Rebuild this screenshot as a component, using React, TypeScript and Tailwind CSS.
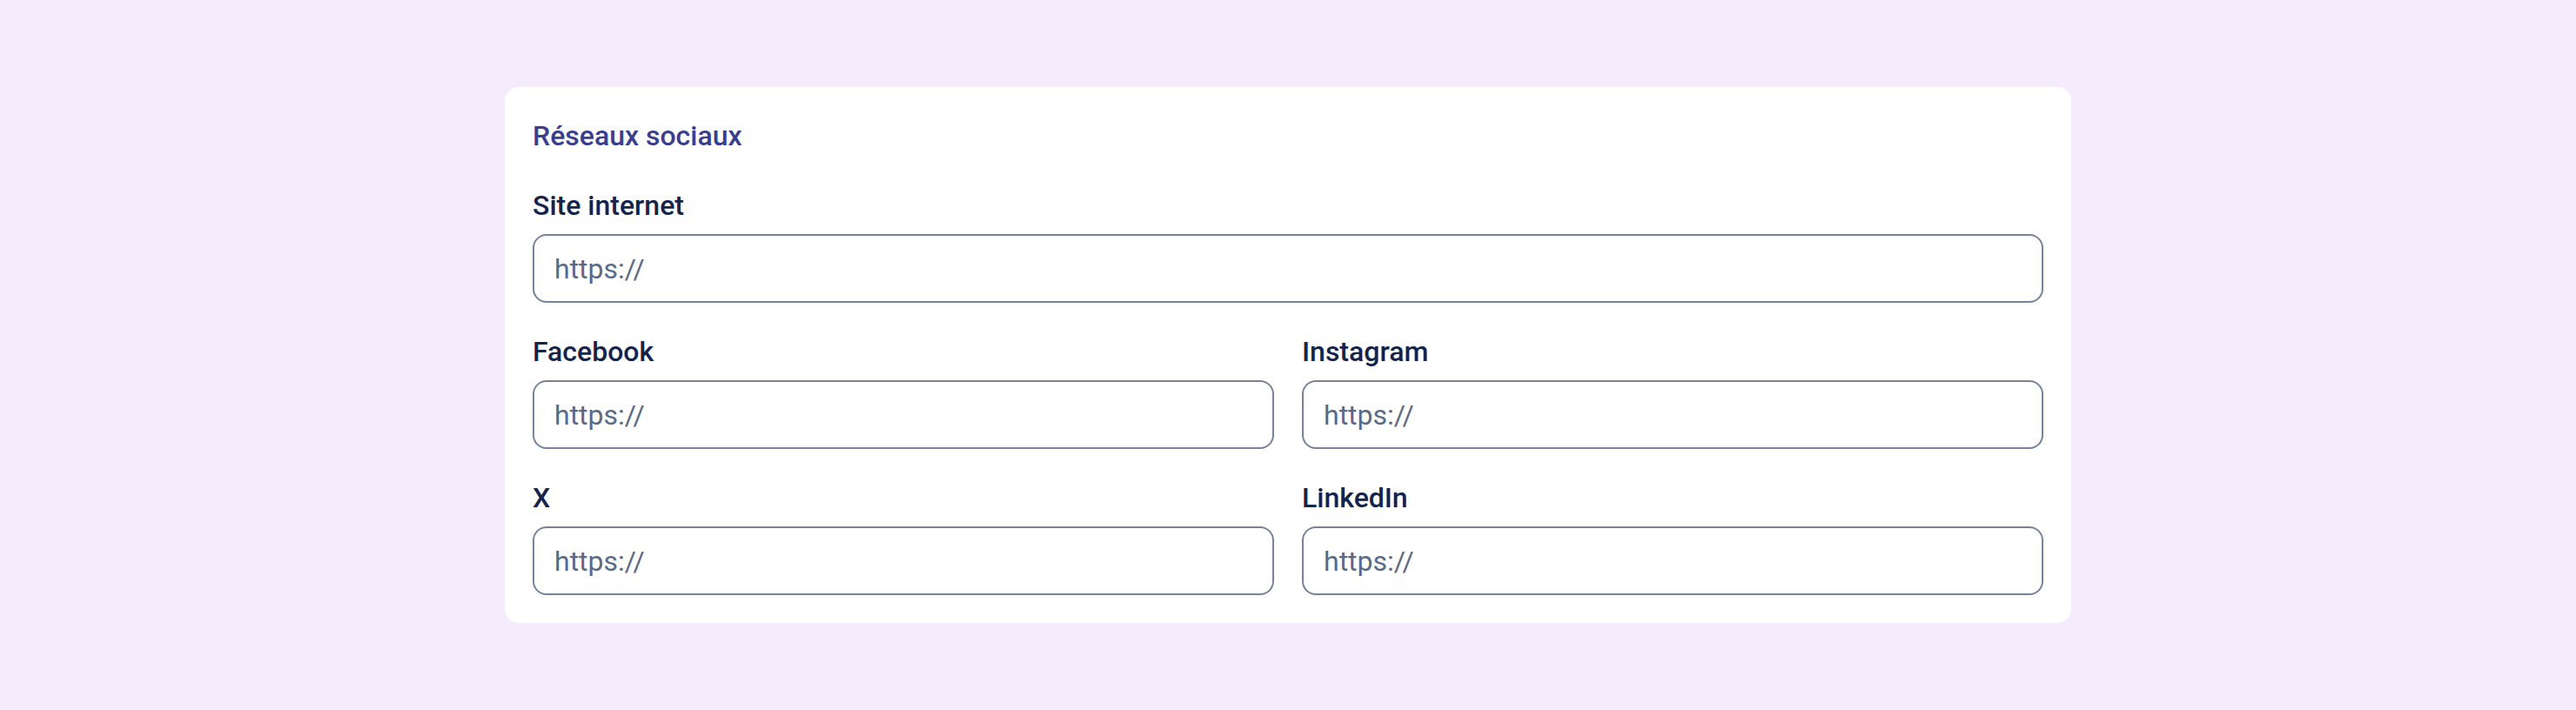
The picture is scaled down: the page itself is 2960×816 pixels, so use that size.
import React from 'react';

const Field = ({ label }: { label: string }) => {
  return (
    <div className="flex flex-col gap-[9px]">
      <label className="text-[32px] leading-[48px] font-medium text-[#14244a]">{label}</label>
      <input
        type="text"
        placeholder="https://"
        className="h-[79px] w-full rounded-[16px] border-2 border-[#77839b] bg-white px-[23px] text-[32px] text-[#14244a] placeholder:text-[#5c6985] outline-none"
      />
    </div>
  );
};

const App = () => {
  return (
    <div className="min-h-[816px] bg-[#f4ecfd] pt-[100px] font-['Roboto',sans-serif]">
      <div className="mx-auto w-[1800px] rounded-[16px] bg-white p-[32px]">
        {/* Section title */}
        <h2 className="text-[32px] leading-[48px] font-medium text-[#3a3e8f]">Réseaux sociaux</h2>

        <div className="mt-[32px] flex flex-col gap-[32px]">
          <Field label="Site internet" />

          <div className="grid grid-cols-2 gap-x-[32px] gap-y-[32px]">
            <Field label="Facebook" />
            <Field label="Instagram" />
            <Field label="X" />
            <Field label="LinkedIn" />
          </div>
        </div>
      </div>
    </div>
  );
};

export default App;
